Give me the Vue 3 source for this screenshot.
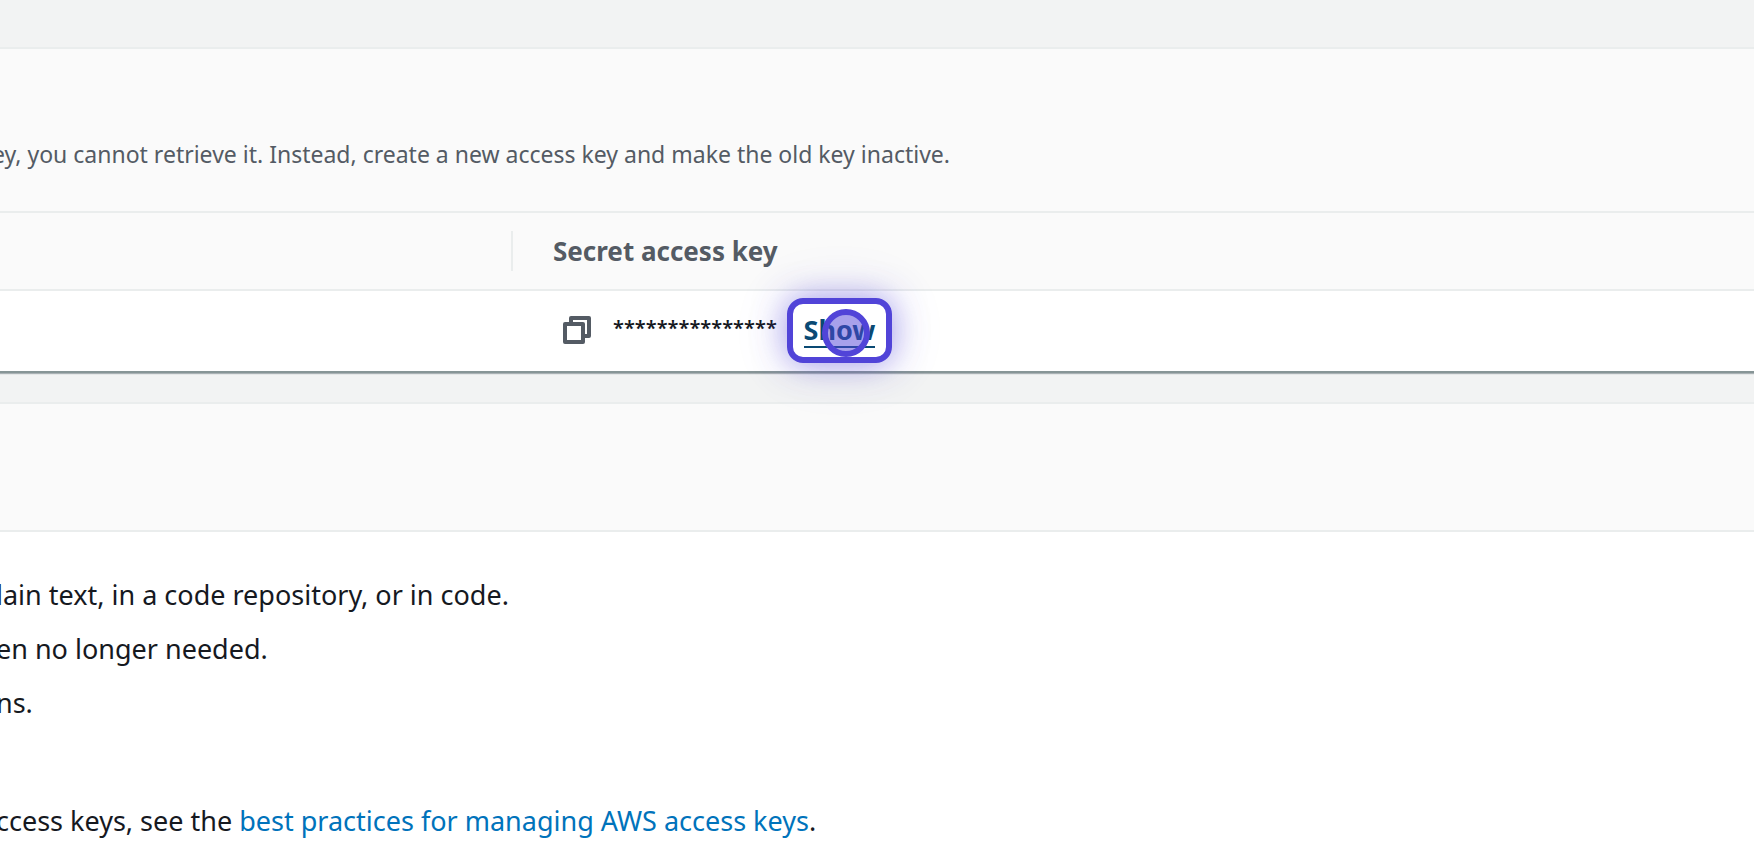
<script setup>
const practices = [
  'lain text, in a code repository, or in code.',
  'en no longer needed.',
  'ns.',
]
const maskedKey = '*'.repeat(15)
</script>

<template>
  <main class="page">
    <section class="panel keys">
      <header class="panel-header">
        <p class="description">ey, you cannot retrieve it. Instead, create a new access key and make the old key inactive.</p>
      </header>
      <table class="key-table">
        <thead>
          <tr>
            <th class="id-col" aria-label="Access key"><span class="divider"></span></th>
            <th scope="col">Secret access key</th>
          </tr>
        </thead>
        <tbody>
          <tr>
            <td></td>
            <td>
              <div class="secret">
                <button class="copy" type="button" aria-label="Copy">
                  <svg viewBox="0 0 28 28" width="28" height="28" fill="none" stroke="#545b64" stroke-width="4" stroke-linejoin="round">
                    <path d="M8 7V2H26V20H21" />
                    <path d="M2 8H20V26H2Z" />
                  </svg>
                </button>
                <span class="mask">{{ maskedKey }}</span>
                <span class="target">
                  <a class="show" href="#show">Show</a>
                  <span class="pointer"></span>
                </span>
              </div>
            </td>
          </tr>
        </tbody>
      </table>
    </section>

    <section class="panel practices">
      <header class="practices-header"></header>
      <div class="practices-body">
        <ul>
          <li v-for="item in practices" :key="item">{{ item }}</li>
        </ul>
        <p>ccess keys, see the <a href="#best-practices">best practices for managing AWS access keys</a>.</p>
      </div>
    </section>
  </main>
</template>

<style>
body {
  margin: 0;
  background: #f2f3f3;
}
</style>

<style scoped>
.page {
  display: flex;
  flex-direction: column;
  min-height: 100vh;
  box-sizing: border-box;
  padding-top: 47px;
  overflow: hidden;
  font-family: "Noto Sans", "Open Sans", sans-serif;
  font-size: 27px;
  line-height: 44px;
  color: #16191f;
  background: #f2f3f3;
}
p, ul {
  margin: 0;
  padding: 0;
  white-space: nowrap;
}
li {
  list-style: none;
}
.panel {
  border-top: 2px solid #eaeded;
}
.keys {
  background: #fff;
  border-bottom: 2px solid #879596;
  box-shadow: 0 1px 1px rgba(0, 28, 36, 0.3);
}
.panel-header {
  padding: 83px 0 35px;
  background: #fafafa;
  border-bottom: 2px solid #eaeded;
}
.description {
  margin-left: -8px;
  font-size: 23px;
  color: #545b64;
}
.key-table {
  width: 100%;
  border-spacing: 0;
  table-layout: fixed;
}
th {
  box-sizing: border-box;
  height: 78px;
  padding: 0 0 0 40px;
  font-size: 26px;
  text-align: left;
  color: #545b64;
  background: #fafafa;
  border-bottom: 2px solid #eaeded;
}
.id-col {
  width: 513px;
}
.divider {
  display: block;
  width: 2px;
  height: 40px;
  margin-left: auto;
  background: #eaeded;
}
td {
  box-sizing: border-box;
  height: 80px;
  padding: 0 0 2px 50px;
}
.secret {
  display: flex;
  align-items: center;
}
.copy {
  display: flex;
  padding: 0;
  border: 0;
  background: none;
}
.mask {
  width: 174px;
  margin-left: 22px;
  padding-bottom: 4px;
  font-size: 20px;
  font-weight: 600;
}
.target {
  position: relative;
  box-sizing: border-box;
  display: flex;
  justify-content: center;
  width: 105px;
  height: 65px;
  padding-top: 5px;
  border: 6px solid #5144d8;
  border-radius: 16px;
  box-shadow: 0 0 60px rgba(81, 68, 216, 0.12), 0 0 32px rgba(81, 68, 216, 0.5);
}
.show {
  height: 37px;
  font-weight: 700;
  line-height: 42px;
  color: #0a4a74;
  text-decoration: none;
  border-bottom: 2px solid #0a4a74;
}
.pointer {
  position: absolute;
  top: 5px;
  left: 29px;
  box-sizing: border-box;
  width: 48px;
  height: 48px;
  border: 6px solid #5144d8;
  border-radius: 50%;
  background: rgba(81, 68, 216, 0.5);
}
.practices {
  flex: 1;
  margin-top: 29px;
  background: #fff;
}
.practices-header {
  height: 126px;
  background: #fafafa;
  border-bottom: 2px solid #eaeded;
}
.practices-body {
  margin-left: -4px;
  padding-top: 41px;
}
li {
  margin-bottom: 10px;
}
.practices-body p {
  padding-top: 64px;
}
.practices-body a {
  color: #0073bb;
  text-decoration: none;
}
</style>
